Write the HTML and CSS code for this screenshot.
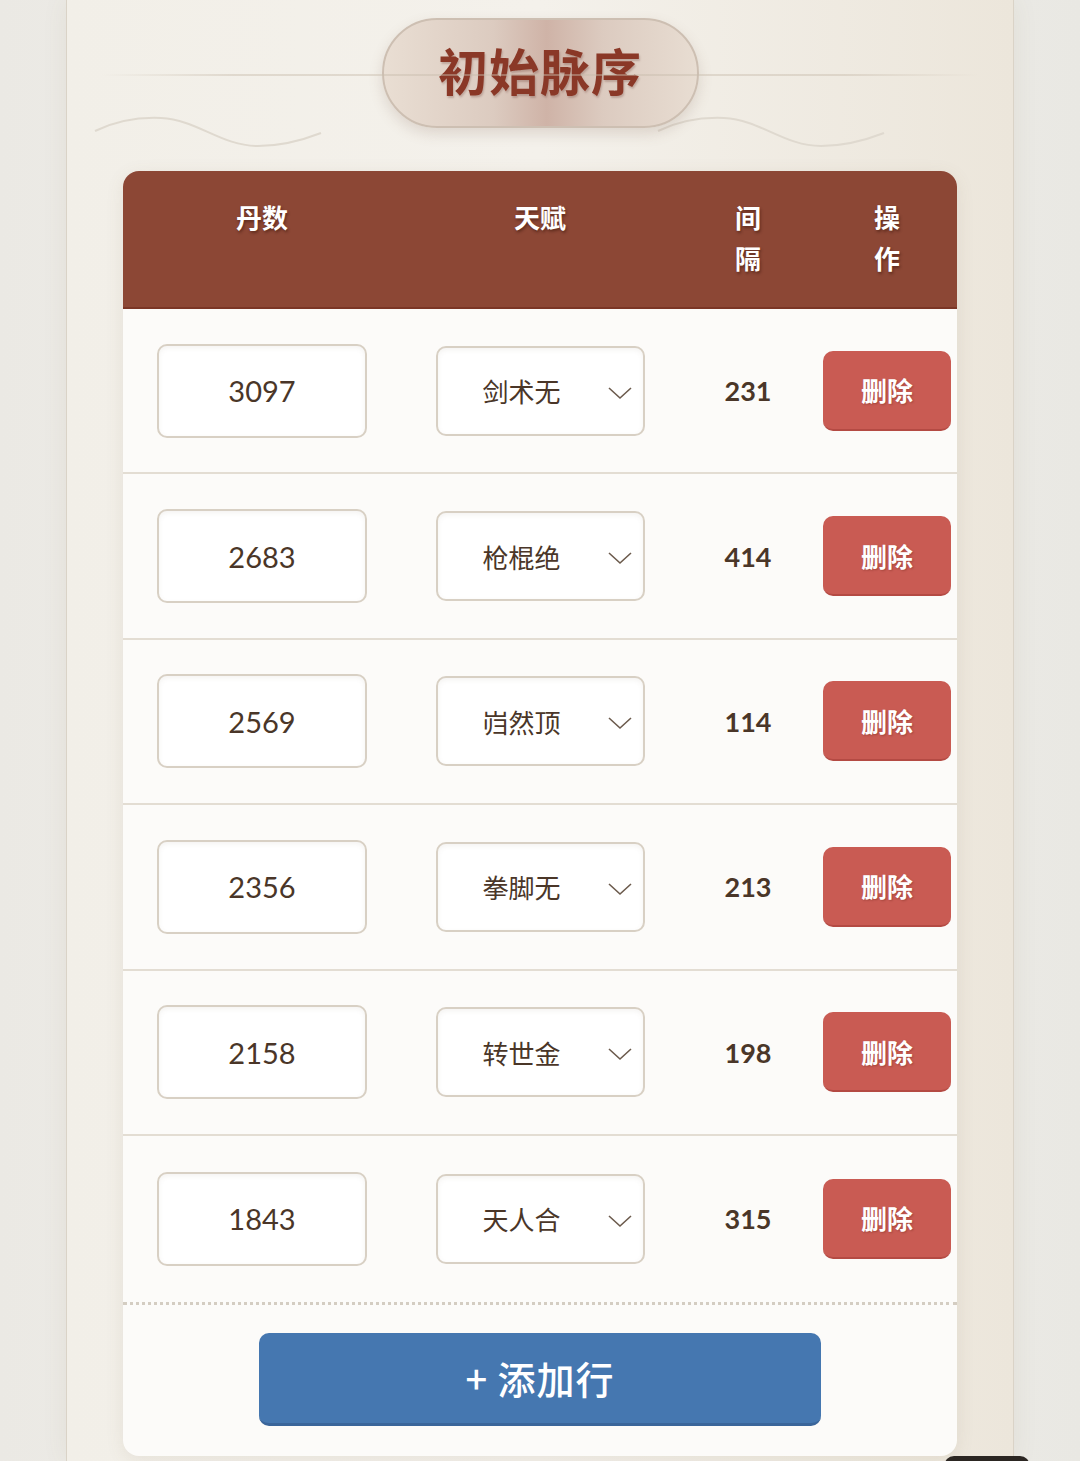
FILE: index.html
```html
<!DOCTYPE html>
<html lang="zh-CN">
<head>
  <meta charset="UTF-8">
  <meta name="viewport" content="width=device-width, initial-scale=1.0">
  <title>初始脉序</title>
  <link rel="stylesheet" href="styles.css">
</head>
<body>
  <div class="page">
    <div class="title-area">
      <svg class="wave wave-left" width="232" height="40" viewBox="0 0 232 40">
        <path d="M2 19 C 25 8, 45 5, 68 6 C 105 8, 128 34, 165 34 C 190 34, 210 28, 228 21" fill="none" stroke="#dfd9cf" stroke-width="2"/>
      </svg>
      <svg class="wave wave-right" width="232" height="40" viewBox="0 0 232 40">
        <path d="M2 19 C 25 8, 45 5, 68 6 C 105 8, 128 34, 165 34 C 190 34, 210 28, 228 21" fill="none" stroke="#dfd9cf" stroke-width="2"/>
      </svg>
      <h1 class="title">初始脉序</h1>
      <div class="title-line"></div>
    </div>

    <div class="card">
      <div class="grid head">
        <div class="th"><span>丹数</span></div>
        <div class="th"><span>天赋</span></div>
        <div class="th narrow"><span>间隔</span></div>
        <div class="th narrow"><span>操作</span></div>
      </div>

      <div class="grid row">
        <div class="cell"><div class="num-input">3097</div></div>
        <div class="cell"><div class="select"><span>剑术无</span><svg class="chev" width="26" height="14" viewBox="0 0 26 14"><path d="M2 2 L13 12 L24 2" fill="none" stroke="#6b5a4c" stroke-width="1.6"/></svg></div></div>
        <div class="cell gap">231</div>
        <div class="cell"><button class="del">删除</button></div>
      </div>

      <div class="grid row">
        <div class="cell"><div class="num-input">2683</div></div>
        <div class="cell"><div class="select"><span>枪棍绝</span><svg class="chev" width="26" height="14" viewBox="0 0 26 14"><path d="M2 2 L13 12 L24 2" fill="none" stroke="#6b5a4c" stroke-width="1.6"/></svg></div></div>
        <div class="cell gap">414</div>
        <div class="cell"><button class="del">删除</button></div>
      </div>

      <div class="grid row">
        <div class="cell"><div class="num-input">2569</div></div>
        <div class="cell"><div class="select"><span>岿然顶</span><svg class="chev" width="26" height="14" viewBox="0 0 26 14"><path d="M2 2 L13 12 L24 2" fill="none" stroke="#6b5a4c" stroke-width="1.6"/></svg></div></div>
        <div class="cell gap">114</div>
        <div class="cell"><button class="del">删除</button></div>
      </div>

      <div class="grid row">
        <div class="cell"><div class="num-input">2356</div></div>
        <div class="cell"><div class="select"><span>拳脚无</span><svg class="chev" width="26" height="14" viewBox="0 0 26 14"><path d="M2 2 L13 12 L24 2" fill="none" stroke="#6b5a4c" stroke-width="1.6"/></svg></div></div>
        <div class="cell gap">213</div>
        <div class="cell"><button class="del">删除</button></div>
      </div>

      <div class="grid row">
        <div class="cell"><div class="num-input">2158</div></div>
        <div class="cell"><div class="select"><span>转世金</span><svg class="chev" width="26" height="14" viewBox="0 0 26 14"><path d="M2 2 L13 12 L24 2" fill="none" stroke="#6b5a4c" stroke-width="1.6"/></svg></div></div>
        <div class="cell gap">198</div>
        <div class="cell"><button class="del">删除</button></div>
      </div>

      <div class="grid row last">
        <div class="cell"><div class="num-input">1843</div></div>
        <div class="cell"><div class="select"><span>天人合</span><svg class="chev" width="26" height="14" viewBox="0 0 26 14"><path d="M2 2 L13 12 L24 2" fill="none" stroke="#6b5a4c" stroke-width="1.6"/></svg></div></div>
        <div class="cell gap">315</div>
        <div class="cell"><button class="del">删除</button></div>
      </div>

      <div class="foot">
        <button class="add">+ 添加行</button>
      </div>
    </div>
  </div>
  <div class="float-btn"></div>
</body>
</html>
```

FILE: styles.css
```css
body {
  margin: 0;
  background: linear-gradient(90deg, #ebe9e4 0%, #f0efeb 40%, #f0efeb 60%, #e9e8e3 100%);
  font-family: Lato, "Noto Sans CJK SC", sans-serif;
  color: #4a3628;
  height: 1461px;
  overflow: hidden;
}
.page {
  width: 948px;
  margin: 0 auto;
  min-height: 1461px;
  padding-top: 18px;
  box-sizing: border-box;
  background: linear-gradient(90deg, #f2efe8 0%, #f4f1eb 50%, #ece6db 100%);
  border-left: 1px solid #dad3c7;
  border-right: 1px solid #dad3c7;
  box-shadow: 0 0 24px rgba(120, 100, 70, 0.08);
  position: relative;
}
.title-area {
  position: relative;
  height: 153px;
  display: flex;
  justify-content: center;
}
.title-line {
  position: absolute;
  left: 34px;
  right: 34px;
  top: 56px;
  height: 2px;
  background: linear-gradient(90deg, rgba(215, 205, 190, 0), rgba(200, 188, 172, 0.45) 15%, rgba(200, 188, 172, 0.45) 85%, rgba(215, 205, 190, 0));
}
.wave {
  position: absolute;
  top: 94px;
}
.wave-left {
  left: 26px;
}
.wave-right {
  left: 589px;
}
.title {
  position: relative;
  margin: 0;
  width: 313px;
  height: 98px;
  padding-bottom: 8px;
  border-radius: 55px;
  border: 2px solid #cdbfb2;
  background: linear-gradient(90deg, #e9ded3 0%, #dccbc0 35%, #cfb3a7 52%, #dccbc0 70%, #e8ddd2 100%);
  box-shadow: 0 6px 14px rgba(120, 90, 70, 0.18);
  display: flex;
  align-items: center;
  justify-content: center;
  font-family: "Noto Sans CJK SC", sans-serif;
  font-size: 50px;
  line-height: 1;
  font-weight: 700;
  color: #8a3827;
  letter-spacing: 1px;
  text-shadow: 1px 2px 2px rgba(90, 40, 30, 0.25);
}
.card {
  margin: 0 56px;
  background: #fcfbf9;
  border-radius: 16px;
  overflow: hidden;
  box-shadow: 0 4px 18px rgba(120, 100, 70, 0.1);
}
.grid {
  display: grid;
  grid-template-columns: 278px 278px 138px 140px;
}
.head {
  background: #8c4735;
  border-bottom: 2px solid #7b3626;
  height: 138px;
  box-sizing: border-box;
}
.th {
  display: flex;
  justify-content: center;
  padding: 25px 0 0;
  font-family: "Noto Sans CJK SC", sans-serif;
  font-size: 26px;
  font-weight: 700;
  line-height: 41px;
  color: #ffffff;
  text-shadow: 1px 2px 3px rgba(40, 10, 0, 0.45);
}
.th.narrow span {
  width: 28px;
  text-align: center;
}
.row {
  height: 165.4px;
  box-sizing: border-box;
  border-bottom: 2px solid #e3ddd3;
}
.row.last {
  height: 169px;
  border-bottom: 3px dotted #d4cdc2;
}
.cell {
  display: flex;
  align-items: center;
  justify-content: center;
}
.num-input {
  width: 210px;
  height: 94px;
  box-sizing: border-box;
  border: 2px solid #d8d0c4;
  border-radius: 10px;
  background: #ffffff;
  box-shadow: inset 0 2px 5px rgba(120, 100, 80, 0.08);
  display: flex;
  align-items: center;
  justify-content: center;
  font-size: 29px;
  color: #4a3628;
}
.select {
  width: 209px;
  height: 90px;
  box-sizing: border-box;
  border: 2px solid #d8d0c4;
  border-radius: 10px;
  background: #ffffff;
  box-shadow: inset 0 2px 5px rgba(120, 100, 80, 0.08);
  display: flex;
  align-items: center;
  padding-left: 45px;
  position: relative;
  font-family: "Noto Sans CJK SC", sans-serif;
  font-size: 26px;
  color: #4a3628;
}
.chev {
  position: absolute;
  right: 10px;
  top: 38px;
}
.gap {
  font-size: 27px;
  font-weight: 700;
  color: #4a3628;
}
.del {
  width: 128px;
  height: 80px;
  border: none;
  border-bottom: 2px solid #b44a43;
  border-radius: 10px;
  background: #c95b53;
  color: #ffffff;
  font-family: "Noto Sans CJK SC", sans-serif;
  font-size: 26px;
  font-weight: 700;
  text-shadow: 1px 1px 2px rgba(80, 20, 10, 0.3);
}
.foot {
  display: flex;
  justify-content: center;
  padding: 28px 0 30px;
}
.add {
  width: 562px;
  height: 93px;
  border: none;
  border-bottom: 3px solid #3a659a;
  border-radius: 10px;
  background: #4577b0;
  color: #ffffff;
  font-family: "Noto Sans CJK SC", sans-serif;
  font-size: 38px;
  line-height: 1;
  font-weight: 500;
  letter-spacing: 1px;
}
.float-btn {
  position: absolute;
  left: 944px;
  top: 1456px;
  width: 86px;
  height: 20px;
  border-radius: 10px;
  background: #2b2622;
}
```
